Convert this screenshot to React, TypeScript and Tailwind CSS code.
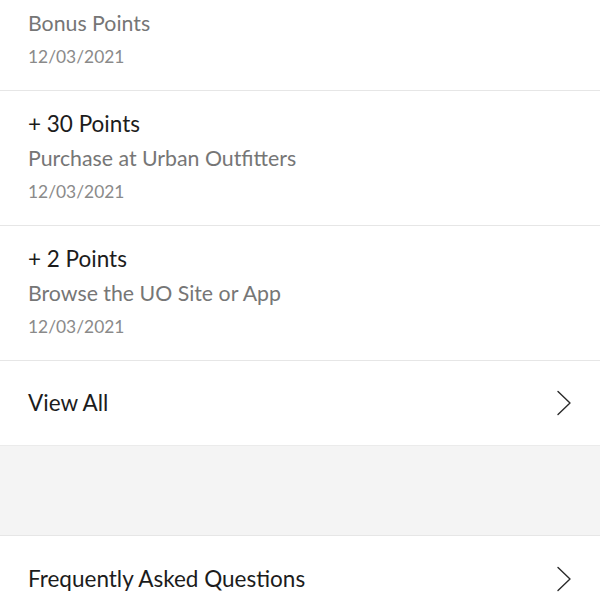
const history = [
  { points: null, label: "Bonus Points", date: "12/03/2021" },
  { points: "+ 30 Points", label: "Purchase at Urban Outfitters", date: "12/03/2021" },
  { points: "+ 2 Points", label: "Browse the UO Site or App", date: "12/03/2021" },
];

function Chevron() {
  return (
    <svg width="16" height="26" viewBox="0 0 16 26" fill="none" className="shrink-0">
      <path d="M2 1.5 L14 13 L2 24.5" stroke="#2a2a2a" strokeWidth="1.4" strokeLinecap="round" strokeLinejoin="round" />
    </svg>
  );
}

function LinkRow({ label, className = "" }: { label: string; className?: string }) {
  return (
    <div className={`flex items-center justify-between bg-white pl-7 pr-7 ${className}`}>
      <span className="text-[22.5px] text-[#1c1c1c]">{label}</span>
      <Chevron />
    </div>
  );
}

export default function App() {
  return (
    <div className="h-[600px] w-[600px] overflow-hidden bg-white font-['Lato',sans-serif]">
      <div className="-mt-[44px]">
        {history.map((h, i) => (
          <div key={i} className="border-b border-[#e6e6e6] px-7 pb-[17px] pt-[16px]">
            <p className="h-[34px] text-[22.5px] leading-[34px] text-[#1c1c1c]">{h.points}</p>
            <p className="text-[21.3px] leading-[35px] text-[#767676]">{h.label}</p>
            <p className="text-[17.4px] leading-[32px] text-[#8a8a8a]">{h.date}</p>
          </div>
        ))}
      </div>
      <LinkRow label="View All" className="h-[85px] border-b border-[#ebebeb]" />
      <div className="h-[90px] border-b border-[#e6e6e6] bg-[#f4f4f4]" />
      <LinkRow label="Frequently Asked Questions" className="h-[86px]" />
    </div>
  );
}
